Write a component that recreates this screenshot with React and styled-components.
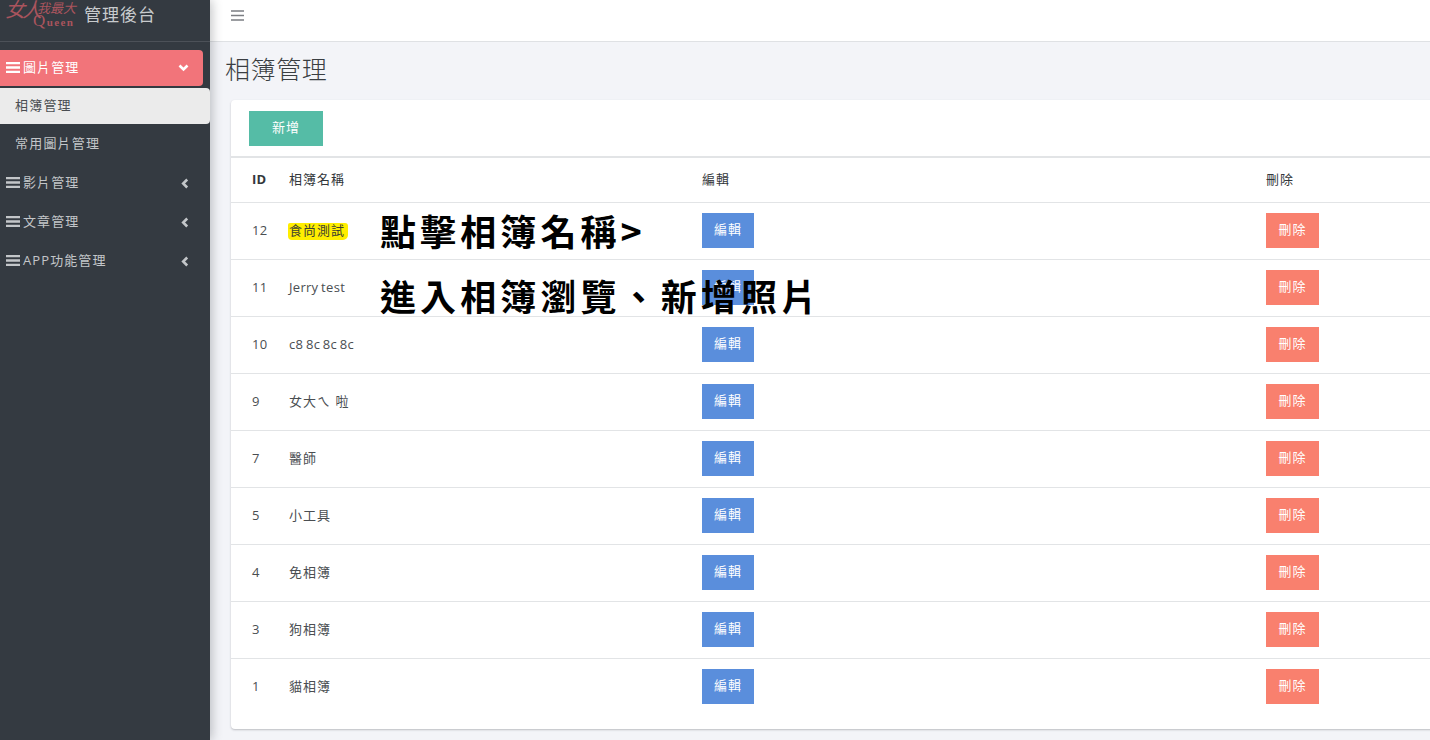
import React from "react";
import styled, { createGlobalStyle } from "styled-components";

const Global = createGlobalStyle`
  html, body { margin: 0; padding: 0; height: 100%; overflow: hidden; background: #f3f4f8; }
  body { font-family: "Open Sans", "Noto Sans CJK TC", sans-serif; color: #3f4449; }
  * { box-sizing: border-box; }
`;

const Page = styled.div`
  display: flex;
  width: 1430px;
  height: 740px;
  overflow: hidden;
`;

const Sidebar = styled.aside`
  flex: 0 0 210px;
  height: 100%;
  background: #343a41;
  box-shadow: 2px 0 10px rgba(40, 44, 52, 0.28);
  position: relative;
  z-index: 2;
`;

const Brand = styled.div`
  height: 42px;
  border-bottom: 1px solid #4c5158;
  display: flex;
  align-items: center;
  padding-left: 5px;
  margin-bottom: 8px;
  overflow: hidden;
`;

const Logo = styled.div`
  position: relative;
  width: 79px;
  height: 42px;
  flex: none;
  color: #a9545d;
  font-family: "Liberation Serif", "Noto Sans CJK TC", serif;
`;

const LogoBig = styled.span`
  position: absolute;
  left: 0;
  top: -6px;
  font-size: 20px;
  line-height: 32px;
  font-style: italic;
  letter-spacing: -3px;
  white-space: nowrap;
`;

const LogoSmall = styled.span`
  position: absolute;
  left: 32px;
  top: 1px;
  font-size: 13px;
  line-height: 16px;
  font-style: italic;
  white-space: nowrap;
`;

const LogoQueen = styled.span`
  position: absolute;
  left: 28px;
  top: 13px;
  font-size: 11px;
  line-height: 16px;
  font-weight: 700;
  letter-spacing: 1.4px;
  white-space: nowrap;
`;

const LogoCap = styled.span`
  font-size: 17px;
  font-weight: 400;
`;

const BrandTitle = styled.span`
  color: #c8cbcd;
  font-size: 17px;
  letter-spacing: 1px;
  margin-top: -11px;
  line-height: 20px;
  white-space: nowrap;
`;

const MenuItem = styled.div`
  height: ${(p) => (p.$active ? "36px" : "39px")};
  width: ${(p) => (p.$active ? "203px" : "210px")};
  display: flex;
  align-items: center;
  padding: 0 ${(p) => (p.$active ? "14px" : "21px")} ${(p) => (p.$active ? "0" : "1px")} 6px;
  background: ${(p) => (p.$active ? "#f2747a" : "transparent")};
  color: ${(p) => (p.$active ? "#fff" : "#c3c6c9")};
  border-radius: ${(p) => (p.$active ? "0 4px 4px 0" : "0")};
  font-size: 13px;
  letter-spacing: 1.1px;
  margin-bottom: ${(p) => (p.$active ? "2px" : "0")};
  white-space: nowrap;
`;

const MenuLabel = styled.span`
  flex: 1;
  margin-left: 3px;
  padding-bottom: 3px;
`;

const Sub = styled.div`
  height: ${(p) => (p.$active ? "36px" : "39px")};
  display: flex;
  align-items: center;
  padding: 0 0 ${(p) => (p.$active ? "3px" : "5px")} 15px;
  font-size: 13px;
  letter-spacing: 1.2px;
  color: ${(p) => (p.$active ? "#4a4e52" : "#c3c6c9")};
  background: ${(p) => (p.$active ? "#ebebeb" : "transparent")};
  border-radius: ${(p) => (p.$active ? "0 4px 4px 0" : "0")};
  margin-bottom: ${(p) => (p.$active ? "1px" : "0")};
`;

const Main = styled.main`
  flex: 1;
  min-width: 0;
  display: flex;
  flex-direction: column;
`;

const TopBar = styled.header`
  height: 42px;
  flex: none;
  background: #fff;
  border-bottom: 1px solid #dfe1e4;
  padding: 10px 0 0 21px;
  color: #7b7e82;
`;

const Title = styled.h1`
  margin: 0;
  padding: 10px 0 0 15px;
  height: 58px;
  font-size: 25px;
  line-height: 34px;
  font-weight: 300;
  color: #3a3e42;
  letter-spacing: 0.6px;
`;

const Card = styled.section`
  position: relative;
  margin-left: 21px;
  width: 1230px;
  height: 629px;
  flex: none;
  background: #fff;
  border-radius: 4px;
  box-shadow: 0 1px 2px rgba(60, 64, 70, 0.3);
`;

const CardHead = styled.div`
  height: 58px;
  padding: 11px 0 0 18px;
  border-bottom: 2px solid #e2e4e6;
`;

const Button = styled.button`
  display: block;
  border: 0;
  border-radius: 0;
  padding: 0 0 4px;
  width: ${(p) => p.$w}px;
  height: 35px;
  background: ${(p) => p.$bg};
  color: #fff;
  font-family: inherit;
  font-size: 13px;
  letter-spacing: 1px;
`;

const Row = styled.div`
  display: grid;
  grid-template-columns: 58px 413px 564px 1fr;
  align-items: center;
  height: ${(p) => (p.$head ? "45px" : "57px")};
  padding-bottom: 1px;
  border-bottom: 1px solid ${(p) => (p.$last ? "transparent" : "#e2e4e6")};
  font-size: 13px;
  letter-spacing: 0.2px;
  color: ${(p) => (p.$head ? "#33373b" : "#4a4e52")};
`;

const IdCell = styled.div`
  padding: 0 0 2px 21px;
  font-weight: ${(p) => (p.$head ? 700 : 400)};
`;

const TextCell = styled.div`
  padding-bottom: 2px;
  letter-spacing: ${(p) => (p.$latin ? "0.3px" : "1px")};
  word-spacing: ${(p) => (p.$latin ? "-1px" : "0")};
`;

const Marked = styled.span`
  display: inline-block;
  height: 17px;
  line-height: 14px;
  padding: 0 3px 0 0;
  margin-left: -1px;
  text-indent: 1px;
  background: #ffee00;
  border-radius: 2px 3px 5px 4px;
  color: #3d3f30;
  position: relative;
  top: 1px;
`;

const Callout = styled.div`
  position: absolute;
  left: 149px;
  top: ${(p) => p.$top}px;
  font-family: "Noto Sans CJK TC", sans-serif;
  font-size: 36px;
  line-height: 46px;
  font-weight: 700;
  letter-spacing: 4.1px;
  color: #000;
  white-space: nowrap;
`;

const BarsIcon = () => (
  <svg width="14" height="11" viewBox="0 0 14 11" style={{ flex: "none", marginTop: "-1px" }}>
    <path d="M0 1.2h14M0 5.5h14M0 9.8h14" stroke="currentColor" strokeWidth="2.3" strokeLinecap="round" />
  </svg>
);

const ChevronDown = () => (
  <svg width="11" height="8" viewBox="0 0 11 8" style={{ flex: "none" }}>
    <path d="M1.5 1.5 5.5 5.5 9.5 1.5" fill="none" stroke="currentColor" strokeWidth="2.6" />
  </svg>
);

const ChevronLeft = () => (
  <svg width="8" height="11" viewBox="0 0 8 11" style={{ flex: "none" }}>
    <path d="M6.2 1.5 2.2 5.5 6.2 9.5" fill="none" stroke="currentColor" strokeWidth="2.6" />
  </svg>
);

const rows = [
  [12, "食尚測試"],
  [11, "Jerry test", true],
  [10, "c8 8c 8c 8c", true],
  [9, "女大ㄟ 啦"],
  [7, "醫師"],
  [5, "小工具"],
  [4, "免相簿"],
  [3, "狗相簿"],
  [1, "貓相簿"],
];

const menus = ["影片管理", "文章管理", "APP功能管理"];

export default function App() {
  return (
    <Page>
      <Global />
      <Sidebar>
        <Brand>
          <Logo>
            <LogoBig>女人</LogoBig>
            <LogoSmall>我最大</LogoSmall>
            <LogoQueen><LogoCap>Q</LogoCap>ueen</LogoQueen>
          </Logo>
          <BrandTitle>管理後台</BrandTitle>
        </Brand>
        <MenuItem $active>
          <BarsIcon />
          <MenuLabel>圖片管理</MenuLabel>
          <ChevronDown />
        </MenuItem>
        <Sub $active>相簿管理</Sub>
        <Sub>常用圖片管理</Sub>
        {menus.map((m) => (
          <MenuItem key={m}>
            <BarsIcon />
            <MenuLabel>{m}</MenuLabel>
            <ChevronLeft />
          </MenuItem>
        ))}
      </Sidebar>
      <Main>
        <TopBar>
          <svg width="13" height="11" viewBox="0 0 13 11" style={{ display: "block" }}>
            <path d="M0 1h13M0 5.5h13M0 10h13" stroke="currentColor" strokeWidth="1.4" />
          </svg>
        </TopBar>
        <Title>相簿管理</Title>
        <Card>
          <CardHead>
            <Button $w={74} $bg="#55bca6">新增</Button>
          </CardHead>
          <Row $head>
            <IdCell $head>ID</IdCell>
            <TextCell>相簿名稱</TextCell>
            <TextCell>編輯</TextCell>
            <TextCell>刪除</TextCell>
          </Row>
          {rows.map(([id, name, latin], i) => (
            <Row key={id} $last={i === rows.length - 1}>
              <IdCell>{id}</IdCell>
              <TextCell $latin={latin}>{i === 0 ? <Marked>{name}</Marked> : name}</TextCell>
              <div><Button $w={52} $bg="#5a8edc">編輯</Button></div>
              <div><Button $w={53} $bg="#f9806e">刪除</Button></div>
            </Row>
          ))}
          <Callout $top={107}>點擊相簿名稱&gt;</Callout>
          <Callout $top={172}>進入相簿瀏覽、新增照片</Callout>
        </Card>
      </Main>
    </Page>
  );
}
